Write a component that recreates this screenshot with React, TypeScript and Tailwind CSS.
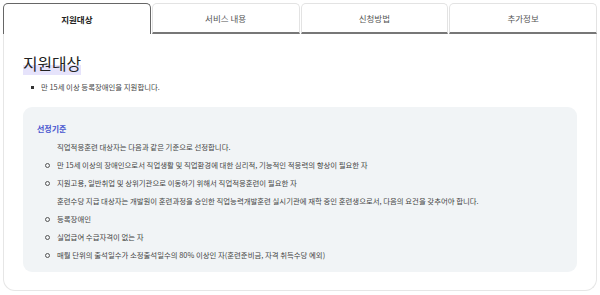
import React from "react";

const tabs = ["지원대상", "서비스 내용", "신청방법", "추가정보"];

const criteria = [
  { text: "만 15세 이상의 장애인으로서 직업생활 및 직업환경에 대한 심리적, 기능적인 적응력의 향상이 필요한 자", bullet: true },
  { text: "지원고용, 일반취업 및 상위기관으로 이동하기 위해서 직업적응훈련이 필요한 자", bullet: true },
  { text: "훈련수당 지급 대상자는 개발원이 훈련과정을 승인한 직업능력개발훈련 실시기관에 재학 중인 훈련생으로서, 다음의 요건을 갖추어야 합니다.", bullet: false },
  { text: "등록장애인", bullet: true },
  { text: "실업급여 수급자격이 없는 자", bullet: true },
  { text: "매월 단위의 출석일수가 소정출석일수의 80% 이상인 자(훈련준비금, 자격 취득수당 예외)", bullet: true },
];

export default function App() {
  return (
    <div
      className="h-[295px] w-[600px] bg-white px-[3px] pt-[3px]"
      style={{ fontFamily: '"Noto Sans CJK KR", "Noto Sans", sans-serif' }}
    >
      {/* tabs */}
      <div className="flex h-[31px] gap-px">
        {tabs.map((t, i) =>
          i === 0 ? (
            <div
              key={t}
              className="flex flex-1 items-center justify-center rounded-t-[5px] border border-b-0 border-[#666] text-[8.5px] font-bold text-[#222]"
            >
              {t}
            </div>
          ) : (
            <div
              key={t}
              className="flex flex-1 items-center justify-center rounded-t-[5px] border border-[#e3e3e3] border-b-2 border-b-[#777] text-[8.5px] text-[#555]"
            >
              {t}
            </div>
          )
        )}
      </div>

      {/* panel */}
      <div className="h-[257px] rounded-b-[12px] border-x border-b border-[#e6e6e6] px-[19px] pt-[20px]">
        <h2 className="text-[15.8px] leading-[20px] text-[#222]">
          <span className="bg-[linear-gradient(transparent_55%,#e6e3fb_55%)]">지원대상</span>
        </h2>

        <ul className="mt-[4px] pl-[8px] text-[7.4px] leading-[18px] text-[#444]">
          <li className="flex items-center gap-[7px]">
            <span className="h-[3px] w-[3px] bg-[#333]" />
            만 15세 이상 등록장애인을 지원합니다.
          </li>
        </ul>

        <div className="mt-[11px] rounded-[9px] bg-[#f1f4f6] pb-[8px] pl-[14px] pr-[10px] pt-[13px]">
          <div className="text-[8px] font-bold leading-[18px] text-[#4a57d0]">선정기준</div>
          <p className="pl-[20px] text-[7.4px] leading-[18px] text-[#444]">
            직업적응훈련 대상자는 다음과 같은 기준으로 선정합니다.
          </p>
          <ul className="text-[7.4px] leading-[18px] text-[#444]">
            {criteria.map((c) => (
              <li key={c.text} className="flex items-center">
                <span className="flex w-[20px] justify-center pl-px">
                  {c.bullet && (
                    <span className="h-[5px] w-[5px] rounded-full border border-[#555]" />
                  )}
                </span>
                <span>{c.text}</span>
              </li>
            ))}
          </ul>
        </div>
      </div>
    </div>
  );
}
